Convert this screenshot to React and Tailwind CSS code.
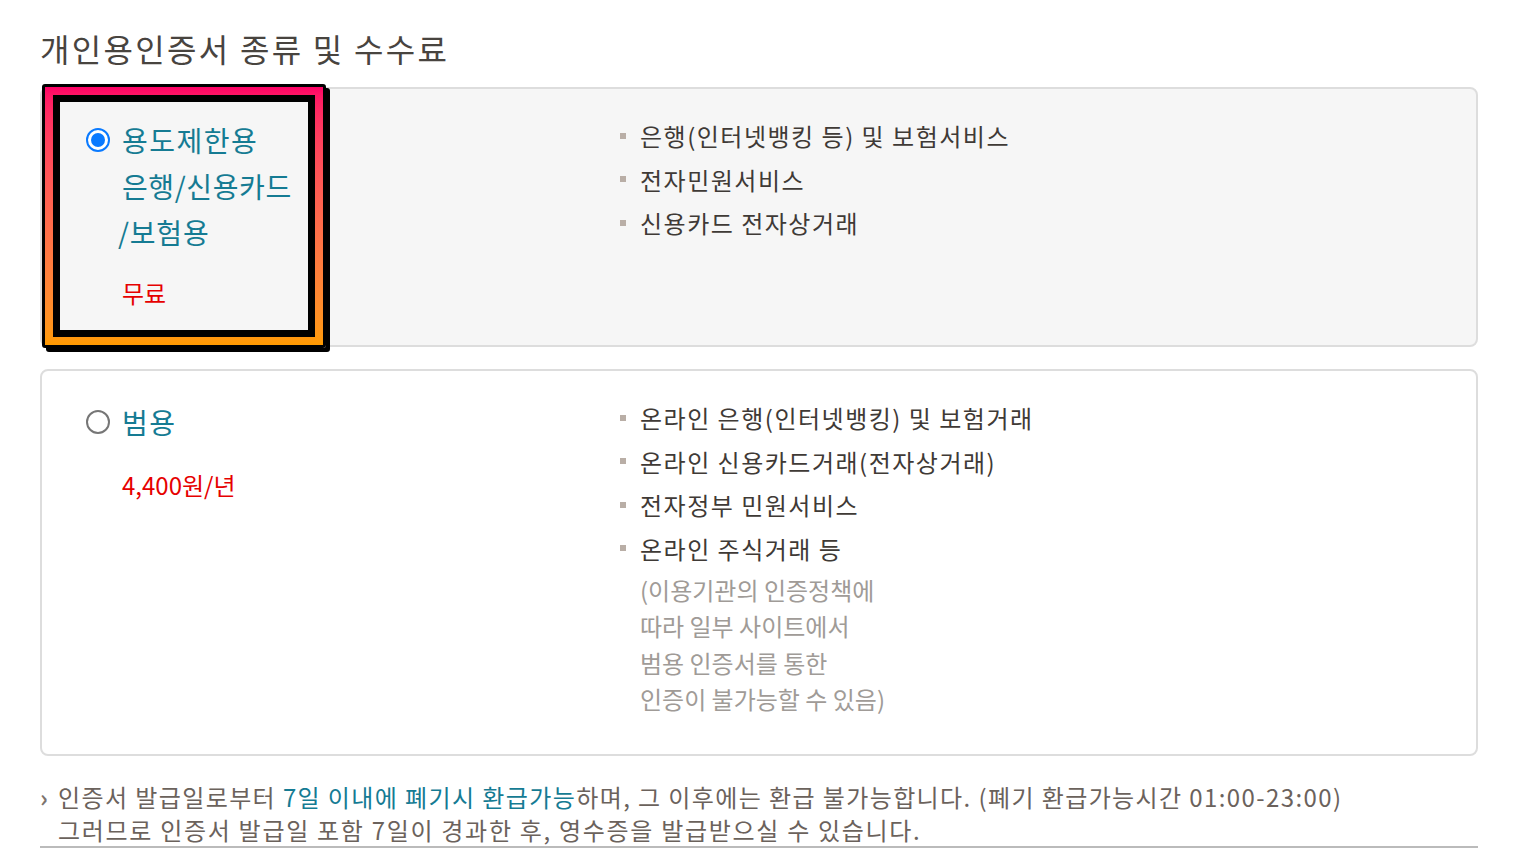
import React from 'react'

const font = { fontFamily: '"Noto Sans CJK KR", "Noto Sans", sans-serif' }

function Radio({ checked }) {
  if (checked) {
    return (
      <span className="mt-[11px] flex h-[24px] w-[24px] shrink-0 items-center justify-center rounded-full border-2 border-[#0a7aff] bg-white">
        <span className="h-[14px] w-[14px] rounded-full bg-[#0a7aff]" />
      </span>
    )
  }
  return <span className="mt-[11px] h-[24px] w-[24px] shrink-0 rounded-full border-2 border-[#767676] bg-white" />
}

function Bullets({ items }) {
  return (
    <ul>
      {items.map(t => (
        <li key={t} className="flex items-center text-[24px] leading-[43.5px] tracking-[1.5px] text-[#3f3a36]">
          <span className="mr-[14px] h-[6px] w-[6px] bg-[#b9aea6]" />
          {t}
        </li>
      ))}
    </ul>
  )
}

function Label({ children }) {
  return <div className="text-[28px] leading-[46px] tracking-[1.5px] text-[#157b93]">{children}</div>
}

export default function App() {
  return (
    <div className="min-h-[850px] bg-white px-[40px]" style={font}>
      <h1 className="pt-[28px] text-[32px] leading-[40px] tracking-[2.3px] font-normal text-[#48443f]">개인용인증서 종류 및 수수료</h1>

      {/* 용도제한용 */}
      <div className="relative mt-[19px] flex h-[260px] rounded-lg border-2 border-[#dddddd] bg-[#f6f6f6]">
        <div className="w-[578px]" />
        <div className="flex-1 pt-[25px]">
          <Bullets items={['은행(인터넷뱅킹 등) 및 보험서비스', '전자민원서비스', '신용카드 전자상거래']} />
        </div>

        {/* 선택 강조 테두리 */}
        <div className="pointer-events-none absolute left-[0px] top-[-5px] h-[264px] w-[284px] rounded-[3px] border-[3px] border-black bg-linear-to-b from-[#ff0066] to-[#ff9a00] p-[8px] shadow-[4px_4px_0_#000]">
          <div className="h-full w-full border-[7px] border-black bg-[#f6f6f6]" />
        </div>
        <div className="absolute left-[0px] top-[-5px] flex h-[264px] w-[300px] gap-[12px] pl-[44px] pt-[33px]">
          <Radio checked />
          <div>
            <Label>
              용도제한용<br /><span className="tracking-[0.6px]">은행/신용카드</span><br /><span className="-ml-[4px] tracking-[0.8px]">/보험용</span>
            </Label>
            <div className="mt-[23px] text-[24px] leading-[30px] text-[#e60000]">무료</div>
          </div>
        </div>
      </div>

      {/* 범용 */}
      <div className="mt-[22px] flex rounded-lg border-2 border-[#dddddd] bg-white pb-[37px]">
        <div className="flex w-[578px] gap-[12px] pl-[44px] pt-[28px]">
          <Radio />
          <div>
            <Label>범용</Label>
            <div className="mt-[25px] text-[24px] leading-[30px] text-[#e60000]">4,400원/년</div>
          </div>
        </div>
        <div className="flex-1 pt-[25px]">
          <Bullets items={['온라인 은행(인터넷뱅킹) 및 보험거래', '온라인 신용카드거래(전자상거래)', '전자정부 민원서비스', '온라인 주식거래 등']} />
          <p className="mt-[2px] pl-[20px] text-[24px] leading-[36.3px] text-[#a09b97]">
            (이용기관의 인증정책에<br />따라 일부 사이트에서<br />범용 인증서를 통한<br />인증이 불가능할 수 있음)
          </p>
        </div>
      </div>

      {/* 안내 */}
      <div className="mt-[24px] flex border-b-2 border-[#bbbbbb] text-[24px] leading-[33px] text-[#6b625c]">
        <span className="w-[18px] shrink-0 font-bold text-[#7d746e]">›</span>
        <p className="tracking-[1.4px]">
          인증서 발급일로부터 <span className="text-[#157b93]">7일 이내에 폐기시 환급가능</span>하며, 그 이후에는 환급 불가능합니다. (폐기 환급가능시간 01:00-23:00)<br />
          <span className="tracking-[1.7px]">그러므로 인증서 발급일 포함 7일이 경과한 후, 영수증을 발급받으실 수 있습니다.</span>
        </p>
      </div>
    </div>
  )
}
